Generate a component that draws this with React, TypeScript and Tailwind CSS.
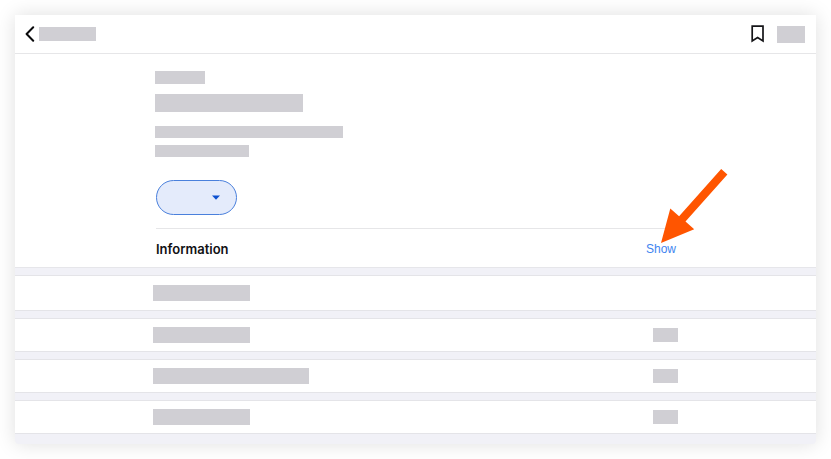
import { useState } from 'react';

// ── Placeholder block ────────────────────────────────────────

function Bar({ className }: { className: string }) {
  return <div className={`bg-[#d0cfd4] ${className}`} />;
}

// ── List rows ────────────────────────────────────────────────

interface Row {
  id: number;
  height: string;
  width: string;
  hasValue: boolean;
}

const ROWS: Row[] = [
  { id: 1, height: 'h-9', width: 'w-[97px]', hasValue: false },
  { id: 2, height: 'h-[34px]', width: 'w-[97px]', hasValue: true },
  { id: 3, height: 'h-[34px]', width: 'w-[156px]', hasValue: true },
  { id: 4, height: 'h-[34px]', width: 'w-[97px]', hasValue: true },
];

function ListRow({ row }: { row: Row }) {
  return (
    <li className={`flex items-center border-y border-[#e4e4e8] bg-white ${row.height}`}>
      <div className="mx-auto flex w-full max-w-[525px] items-center justify-between">
        <Bar className={`h-4 ${row.width}`} />
        {row.hasValue && <Bar className="h-3.5 w-[25px]" />}
      </div>
    </li>
  );
}

// ── Pointer arrow ────────────────────────────────────────────

function PointerArrow() {
  return (
    <svg
      viewBox="0 0 68 76"
      className="pointer-events-none absolute bottom-[23px] left-3.5 h-[76px] w-[68px] max-w-none"
      aria-hidden="true"
    >
      <path d="M1 75 10.3 40.5 19.1 48.2 61.2 1 67.4 6.4 25.5 53.6 34.2 61.3Z" fill="#ff5500" />
    </svg>
  );
}

// ── Page ─────────────────────────────────────────────────────

export default function App() {
  const [expanded, setExpanded] = useState(false);

  return (
    <div className="bg-white p-[15px] font-['Inter','Liberation_Sans',sans-serif]">
      <main className="rounded-b-sm bg-[#f1f1f7] pb-2.5 shadow-[0_0_20px_rgba(0,0,0,0.13)]">
        {/* Header */}
        <header className="flex h-[39px] items-center justify-between border-b border-[#e6e6e8] bg-white pr-[11px] pl-2.5">
          <button type="button" aria-label="Back" className="flex items-center gap-1">
            <svg viewBox="0 0 10 16" className="h-4 w-2.5" fill="none" aria-hidden="true">
              <path d="M8.2 1.2 1.6 8 8.2 14.8" stroke="#0a0a0c" strokeWidth="2" strokeLinecap="round" strokeLinejoin="round" />
            </svg>
            <Bar className="h-3.5 w-[57px]" />
          </button>
          <div className="flex items-center gap-3">
            <button type="button" aria-label="Bookmark">
              <svg viewBox="0 0 14 18" className="h-[18px] w-3.5" fill="none" aria-hidden="true">
                <path d="M1.2 1.2H12V16L6.6 12.6 1.2 16Z" stroke="#151518" strokeWidth="1.7" strokeLinejoin="miter" />
              </svg>
            </button>
            <Bar className="h-[17px] w-7" />
          </div>
        </header>

        {/* Summary */}
        <section className="border-b border-[#e6e6ea] bg-white pt-[17px]">
          <div className="mx-auto max-w-[521px]">
            <Bar className="h-[13px] w-[50px]" />
            <Bar className="mt-2.5 h-[18px] w-[148px]" />
            <Bar className="mt-3.5 h-3 w-[188px]" />
            <Bar className="mt-[7px] h-3 w-[94px]" />
            <div className="mt-[23px] pl-px">
              <button
                type="button"
                aria-label="Options"
                className="flex h-[35px] w-[81px] items-center justify-end rounded-full border border-[#4a80dc] bg-[#e4ebfb] pr-4"
              >
                <svg viewBox="0 0 8 5" className="h-[5px] w-2" aria-hidden="true">
                  <path d="M0 0.4H8L4 4.8Z" fill="#0b50d0" />
                </svg>
              </button>

              <div className="mt-[13px] flex h-[39px] items-center justify-between border-t border-[#e6e6e8] pt-0.5">
                <h2 className="text-[13px] leading-4 font-semibold text-[#111114]">Information</h2>
                <button
                  type="button"
                  aria-expanded={expanded}
                  onClick={() => setExpanded(!expanded)}
                  className="relative h-9 font-['Liberation_Sans',sans-serif] text-xs text-[#4285f0]"
                >
                  Show
                  <PointerArrow />
                </button>
              </div>
            </div>
          </div>
        </section>

        {/* Rows */}
        <ul className="mt-[7px] flex flex-col gap-[7px]">
          {ROWS.map((row) => (
            <ListRow key={row.id} row={row} />
          ))}
        </ul>
      </main>
    </div>
  );
}
